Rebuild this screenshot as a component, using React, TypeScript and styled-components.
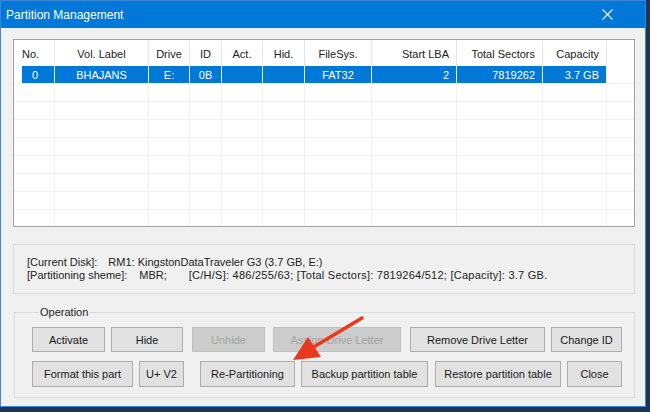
import React from "react";
import styled, { createGlobalStyle } from "styled-components";

const GlobalStyle = createGlobalStyle`
  html, body {
    margin: 0;
    padding: 0;
    background: #1d3550;
  }
  body {
    font-family: "Liberation Sans", Arial, sans-serif;
    font-size: 11px;
  }
`;

const Window = styled.div`
  position: relative;
  width: 644px;
  height: 405px;
  border: 1px solid #3b86d0;
  background: #f0f0f0;
  display: flex;
  flex-direction: column;
`;

const TitleBar = styled.div`
  height: 27px;
  flex: none;
  background: #0078d7;
  color: #fff;
  font-size: 12px;
  display: flex;
  align-items: center;
  justify-content: space-between;
  padding: 0 32px 0 5px;
`;

const Body = styled.div`
  flex: 1;
  display: flex;
  flex-direction: column;
  padding: 11px 10px 8px 12px;
`;

const cols = "41px 94px 41px 32px 41px 42px 67px 85px 86px 64px 1fr";

const ListView = styled.div`
  height: 186px;
  flex: none;
  border: 1px solid #a3a3a3;
  background: #fff;
  overflow: hidden;
`;

const HeaderRow = styled.div`
  display: grid;
  grid-template-columns: ${cols};
  height: 26px;
`;

type Align = "left" | "center" | "right";

const justify = (a: Align) => (a === "left" ? "flex-start" : a === "right" ? "flex-end" : "center");

const HeaderCell = styled.div<{ $align: Align; $pl?: number }>`
  display: flex;
  align-items: center;
  justify-content: ${p => justify(p.$align)};
  padding: 1px 7px 0 ${p => p.$pl ?? 7}px;
  border-right: 1px solid #e5e5e5;
  color: #222;
  white-space: nowrap;
  &:last-child {
    border-right: none;
  }
`;

const Row = styled.div`
  display: grid;
  grid-template-columns: ${cols};
  height: 18px;
`;

const Cell = styled.div<{ $align: Align; $pl?: number; $selected?: boolean; $first?: boolean }>`
  display: flex;
  align-items: center;
  justify-content: ${p => justify(p.$align)};
  padding: 0 7px 0 ${p => p.$pl ?? 7}px;
  border-right: 1px solid #f0f0f0;
  border-bottom: 1px solid #f0f0f0;
  color: ${p => (p.$selected ? "#fff" : "#000")};
  background: ${p =>
    p.$selected
      ? p.$first
        ? "linear-gradient(to right, transparent 8px, #0078d7 8px)"
        : "#0078d7"
      : "transparent"};
  white-space: nowrap;
  &:last-child {
    border-right: none;
  }
`;

const InfoBox = styled.div`
  margin-top: 17px;
  border: 1px solid #dcdcdc;
  padding: 11px 13px;
  line-height: 13px;
  color: #222;
`;

const InfoLine = styled.div`
  white-space: nowrap;
`;

const Part = styled.span<{ $ml?: number; $ls?: number }>`
  margin-left: ${p => p.$ml ?? 0}px;
  letter-spacing: ${p => p.$ls ?? 0}px;
`;

const Group = styled.fieldset`
  margin: 12px 0 0 1px;
  border: 1px solid #dcdcdc;
  padding: 8px 12px 10px 17px;
  display: flex;
  flex-direction: column;
  gap: 9px;
`;

const Legend = styled.legend`
  padding: 0 1px;
  margin-left: 7px;
  line-height: 13px;
  color: #222;
`;

const ButtonRow = styled.div`
  display: flex;
`;

const Btn = styled.button<{ $w: number; $ml: number; $h: number }>`
  width: ${p => p.$w}px;
  height: ${p => p.$h}px;
  margin-left: ${p => p.$ml}px;
  padding: 0;
  font-family: "Liberation Sans", Arial, sans-serif;
  font-size: 11px;
  color: #1a1a1a;
  background: #e1e1e1;
  border: 1px solid #adadad;
  white-space: nowrap;
  &:disabled {
    color: #a3a3a3;
    background: #cccccc;
    border-color: #bfbfbf;
  }
`;

const Overlay = styled.svg`
  position: absolute;
  left: -1px;
  top: -1px;
  pointer-events: none;
`;

const columns: { label: string; align: Align; hpl?: number; dpl?: number }[] = [
  { label: "No.", align: "left", hpl: 8, dpl: 18 },
  { label: "Vol. Label", align: "center" },
  { label: "Drive", align: "center" },
  { label: "ID", align: "center" },
  { label: "Act.", align: "center" },
  { label: "Hid.", align: "center" },
  { label: "FileSys.", align: "center" },
  { label: "Start LBA", align: "right" },
  { label: "Total Sectors", align: "right" },
  { label: "Capacity", align: "right" },
  { label: "", align: "left" },
];

const partition = ["0", "BHAJANS", "E:", "0B", "", "", "FAT32", "2", "7819262", "3.7 GB"];

const row1 = [
  { t: "Activate", w: 73, ml: 0 },
  { t: "Hide", w: 72, ml: 6 },
  { t: "Unhide", w: 73, ml: 9, off: true },
  { t: "Assign Drive Letter", w: 128, ml: 8, off: true },
  { t: "Remove Drive Letter", w: 135, ml: 9 },
  { t: "Change ID", w: 71, ml: 6 },
];

const row2 = [
  { t: "Format this part", w: 101, ml: 0 },
  { t: "U+ V2", w: 45, ml: 6 },
  { t: "Re-Partitioning", w: 95, ml: 16 },
  { t: "Backup partition table", w: 127, ml: 6 },
  { t: "Restore partition table", w: 126, ml: 7 },
  { t: "Close", w: 55, ml: 6 },
];

export default function App() {
  const emptyRows = Array.from({ length: 8 });
  return (
    <>
      <GlobalStyle />
      <Window>
        <TitleBar>
          <span>Partition Management</span>
          <svg width="11" height="11" viewBox="0 0 11 11">
            <path d="M0.5 0.5 L10.5 10.5 M10.5 0.5 L0.5 10.5" stroke="#fff" strokeWidth="1.1" />
          </svg>
        </TitleBar>
        <Body>
          <ListView>
            <HeaderRow>
              {columns.map((c, i) => (
                <HeaderCell key={i} $align={c.align} $pl={c.hpl}>
                  {c.label}
                </HeaderCell>
              ))}
            </HeaderRow>
            <Row>
              {columns.map((c, i) => (
                <Cell
                  key={i}
                  $align={c.align}
                  $pl={c.dpl}
                  $selected={i < partition.length}
                  $first={i === 0}
                >
                  {partition[i] ?? ""}
                </Cell>
              ))}
            </Row>
            {emptyRows.map((_, r) => (
              <Row key={r}>
                {columns.map((c, i) => (
                  <Cell key={i} $align={c.align} />
                ))}
              </Row>
            ))}
          </ListView>

          <InfoBox>
            <InfoLine>
              [Current Disk]:<Part $ml={11}>RM1: KingstonDataTraveler G3 (3.7 GB, E:)</Part>
            </InfoLine>
            <InfoLine>
              [Partitioning sheme]:<Part $ml={12}>MBR;</Part>
              <Part $ml={22} $ls={0.25}>
                [C/H/S]: 486/255/63; [Total Sectors]: 7819264/512; [Capacity]: 3.7 GB.
              </Part>
            </InfoLine>
          </InfoBox>

          <Group>
            <Legend>Operation</Legend>
            <ButtonRow>
              {row1.map(b => (
                <Btn key={b.t} $w={b.w} $ml={b.ml} $h={25} disabled={b.off}>
                  {b.t}
                </Btn>
              ))}
            </ButtonRow>
            <ButtonRow>
              {row2.map(b => (
                <Btn key={b.t} $w={b.w} $ml={b.ml} $h={26}>
                  {b.t}
                </Btn>
              ))}
            </ButtonRow>
          </Group>
        </Body>

        <Overlay width="650" height="412" viewBox="0 0 650 412">
          <line x1="362" y1="318" x2="312" y2="348" stroke="#e8381d" strokeWidth="3.5" strokeLinecap="round" />
          <polygon points="293,360 308,337 321,357" fill="#e8381d" />
        </Overlay>
      </Window>
    </>
  );
}
